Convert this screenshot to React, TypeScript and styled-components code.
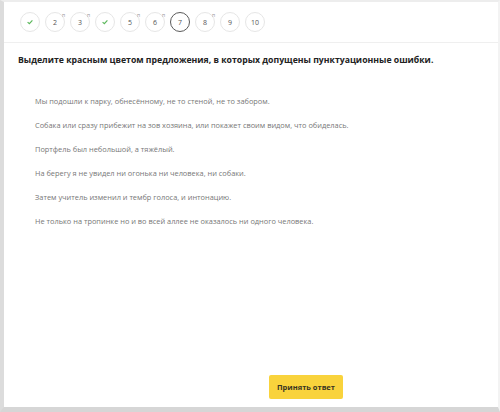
import styled, { createGlobalStyle } from 'styled-components';

const Global = createGlobalStyle`
  body {
    margin: 0;
    background: #fff;
    font-family: 'Open Sans', 'Liberation Sans', sans-serif;
  }
`;

const Frame = styled.div`
  width: 500px;
  height: 412px;
  box-sizing: border-box;
  border-left: 4px solid #dcdcdc;
  border-top: 2px solid #ededed;
  border-bottom: 5px solid #d6d6d6;
  border-right: 2px solid #f3f3f3;
  display: flex;
  flex-direction: column;
  background: #fff;
`;

const Steps = styled.div`
  height: 40px;
  display: flex;
  align-items: center;
  gap: 5px;
  padding-left: 16px;
  border-bottom: 1px solid #efefef;
`;

const Step = styled.div<{ $current?: boolean }>`
  position: relative;
  width: 20px;
  height: 20px;
  box-sizing: border-box;
  border-radius: 50%;
  border: ${(p) => (p.$current ? '1.5px solid #5a5a5a' : '1px solid #e6e6e6')};
  display: flex;
  align-items: center;
  justify-content: center;
  font-size: 7px;
  color: #555;
`;

const Mark = styled.span`
  position: absolute;
  top: -1px;
  right: -1px;
  font-size: 5px;
  color: #999;
`;

const Title = styled.h1`
  margin: 0;
  padding: 11px 0 0 14px;
  font-size: 8.7px;
  font-weight: 700;
  color: #222;
`;

const Sentences = styled.div`
  display: flex;
  flex-direction: column;
  gap: 13px;
  padding: 30px 0 0 31px;
`;

const Sentence = styled.div`
  font-size: 7.4px;
  line-height: 11px;
  color: #777;
`;

const Footer = styled.div`
  margin-top: auto;
  padding: 0 0 8px 265px;
`;

const Submit = styled.button`
  width: 74px;
  height: 24px;
  border: none;
  border-radius: 2px;
  background: #f9d33c;
  color: #3a3522;
  font-family: 'Open Sans', 'Liberation Sans', sans-serif;
  font-size: 7.5px;
  font-weight: 700;
  padding: 0;
`;

const Check = () => (
  <svg width='8' height='8' viewBox='0 0 10 10'>
    <path d='M2 5.2 L4.2 7.2 L8 3' fill='none' stroke='#5cb85c' strokeWidth='1.5' />
  </svg>
);

const steps: { label: string; done?: boolean; mark?: boolean; current?: boolean }[] = [
  { label: '1', done: true },
  { label: '2', mark: true },
  { label: '3', mark: true },
  { label: '4', done: true },
  { label: '5', mark: true },
  { label: '6', mark: true },
  { label: '7', current: true },
  { label: '8', mark: true },
  { label: '9' },
  { label: '10' },
];

const sentences = [
  'Мы подошли к парку, обнесённому, не то стеной, не то забором.',
  'Собака или сразу прибежит на зов хозяина, или покажет своим видом, что обиделась.',
  'Портфель был небольшой, а тяжёлый.',
  'На берегу я не увидел ни огонька ни человека, ни собаки.',
  'Затем учитель изменил и тембр голоса, и интонацию.',
  'Не только на тропинке но и во всей аллее не оказалось ни одного человека.',
];

const App = () => {
  return (
    <>
      <Global />
      <Frame>
        <Steps>
          {steps.map((s) => (
            <Step key={s.label} $current={s.current}>
              {s.done ? <Check /> : s.label}
              {s.mark && <Mark>п</Mark>}
            </Step>
          ))}
        </Steps>
        <Title>Выделите красным цветом предложения, в которых допущены пунктуационные ошибки.</Title>
        <Sentences>
          {sentences.map((t) => (
            <Sentence key={t}>{t}</Sentence>
          ))}
        </Sentences>
        <Footer>
          <Submit>Принять ответ</Submit>
        </Footer>
      </Frame>
    </>
  );
};

export default App;
